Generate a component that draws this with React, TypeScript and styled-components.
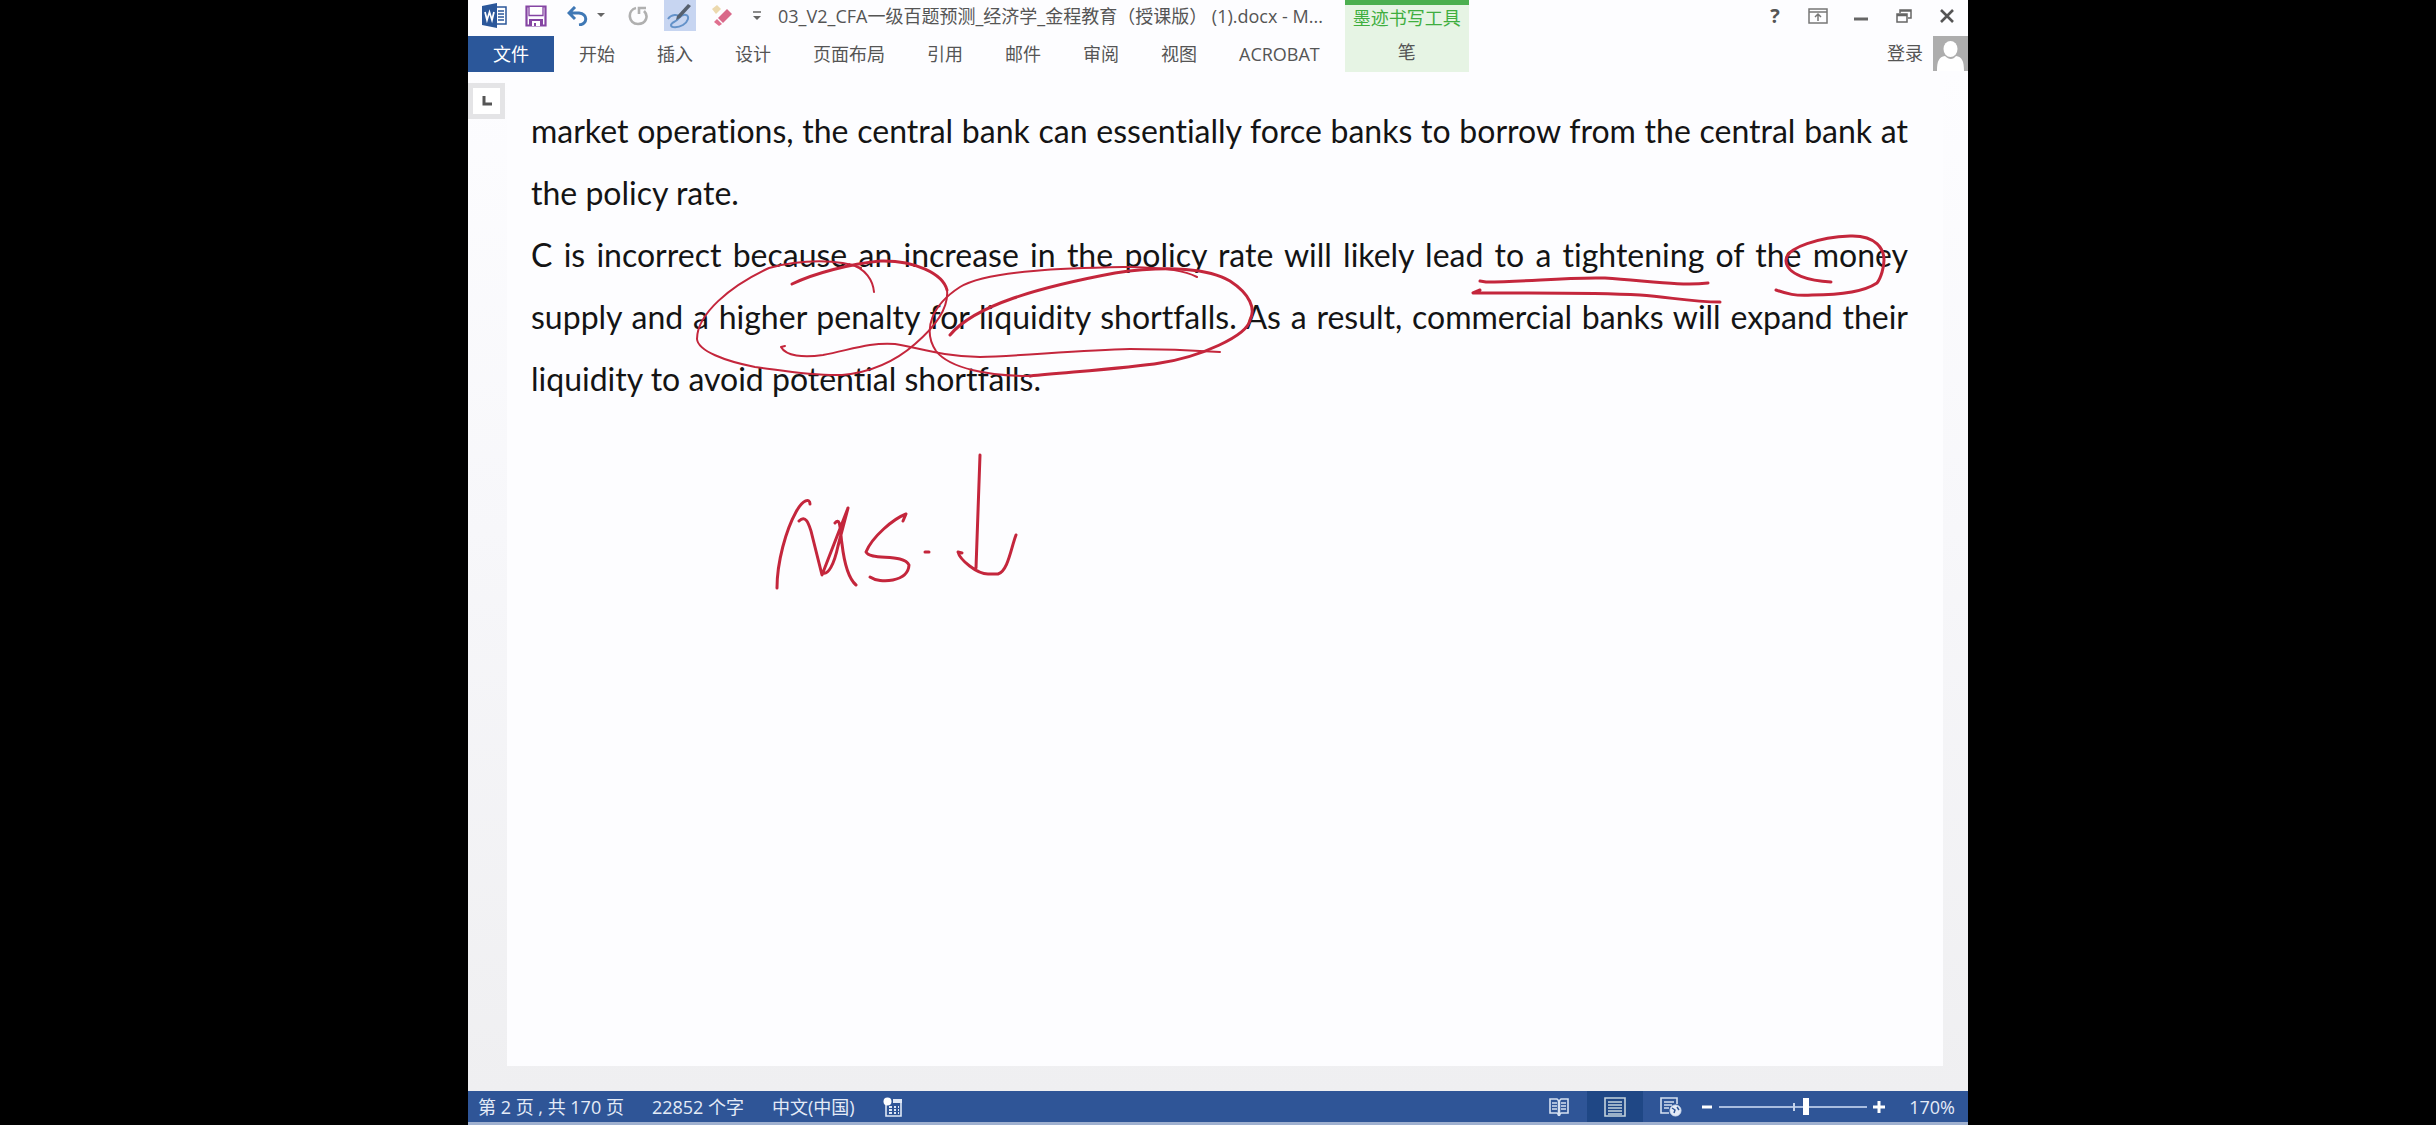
import React from 'react';
import styled, { createGlobalStyle, css } from 'styled-components';

const ui = '"Open Sans", "Noto Sans CJK SC", sans-serif';

const Global = createGlobalStyle`
  * { box-sizing: border-box; }
  body { margin: 0; background: #000; font-family: ${ui}; color: #555; }
  button { font: inherit; color: inherit; border: 0; background: none; padding: 0; white-space: nowrap; }
  svg { display: block; fill: none; }
`;

const Stage = styled.div`
  display: flex;
  justify-content: center;
  height: 100vh;
  overflow: hidden;
`;

const AppWindow = styled.div`
  display: flex;
  flex-direction: column;
  height: 100%;
  aspect-ratio: 4 / 3;
  background: #fdfdff;
`;

const Header = styled.header`
  display: flex;
  flex: none;
  height: 72px;
  justify-content: space-between;
`;

const HeaderMain = styled.div`
  display: flex;
`;

const Rows = styled.div`
  display: flex;
  flex-direction: column;
`;

const TitleRow = styled.div`
  display: flex;
  height: 36px;
  padding-left: 13px;
  align-items: flex-start;
`;

const ToolButton = styled.button<{ $w: number; $on?: boolean }>`
  display: flex;
  align-items: center;
  justify-content: center;
  flex: none;
  width: ${p => p.$w}px;
  height: 31px;
  ${p => p.$on && css`background: #c7d5f1;`}
`;

const Title = styled.h1`
  margin: 0 0 0 12px;
  font-size: 18px;
  font-weight: 400;
  line-height: 32px;
  white-space: nowrap;
`;

const Tabs = styled.nav`
  display: flex;
  height: 36px;
`;

const Tab = styled.button`
  padding: 0 21px;
  font-size: 18px;
  line-height: 32px;
`;

const FileTab = styled(Tab)`
  width: 86px;
  margin-right: 4px;
  background: #2b579a;
  color: #fff;
`;

const ToolGroup = styled.div`
  display: flex;
  flex-direction: column;
  width: 124px;
  margin-left: 4px;
  border-top: 5px solid #4caf50;
  background: #e6f4e4;
  text-align: center;
`;

const ToolGroupName = styled.span`
  height: 31px;
  color: #3fae3f;
  font-size: 18px;
  line-height: 26px;
  white-space: nowrap;
`;

const Side = styled.div`
  display: flex;
  flex-direction: column;
  align-items: flex-end;
`;

const WindowButtons = styled.div`
  display: flex;
  height: 35px;
  align-items: flex-start;
`;

const WinButton = styled(ToolButton)`
  font-size: 20px;
  font-weight: 700;
`;

const Account = styled.button`
  display: flex;
  align-items: center;
  gap: 10px;
  height: 36px;
  font-size: 18px;
  line-height: 32px;
`;

const Workspace = styled.main`
  display: flex;
  flex: 1;
  min-height: 0;
  background: linear-gradient(#fdfdff, #f7f7fa 45%, #efeff1);
`;

const Gutter = styled.div`
  flex: none;
  width: 39px;
  padding-top: 11px;
`;

const TabStop = styled.button`
  display: flex;
  width: 37px;
  height: 36px;
  align-items: center;
  justify-content: center;
  border: 5px solid #e4e4e6;
  background: #fff;
`;

const Page = styled.article`
  position: relative;
  flex: 1;
  margin: 0 25px 25px 0;
  padding: 28px 35px 0 24px;
  background: #fdfdff;
  color: #141414;
  font-family: Lato, "Liberation Sans", sans-serif;
  font-size: 32px;
  font-variant-ligatures: none;
  line-height: 62px;
`;

const Paragraph = styled.p`
  margin: 0;
  text-align: justify;
`;

const Ink = styled.svg`
  position: absolute;
  left: 0;
  top: 0;
  width: 100%;
  stroke: #c4263c;
  stroke-linecap: round;
  stroke-linejoin: round;
  pointer-events: none;
`;

const StatusBar = styled.footer`
  display: flex;
  flex: none;
  height: 34px;
  align-items: center;
  justify-content: space-between;
  padding: 0 13px 0 10px;
  border-bottom: 3px solid #9fb0cf;
  background: #2f5597;
  color: #e4ebf7;
  font-size: 18px;
  line-height: 30px;
`;

const StatusGroup = styled.div`
  display: flex;
  align-items: center;
  height: 100%;
  gap: 28px;
`;

const ViewGroup = styled(StatusGroup)`
  gap: 0;
`;

const ViewButton = styled.button<{ $on?: boolean }>`
  display: flex;
  width: 56px;
  height: 100%;
  align-items: center;
  justify-content: center;
  ${p => p.$on && css`background: #1f4785;`}
`;

const ZoomStep = styled.button`
  display: flex;
  align-items: center;
  justify-content: center;
  width: 16px;
  height: 30px;
`;

const ZoomSlider = styled.input`
  appearance: none;
  width: 148px;
  height: 20px;
  margin: 0 4px;
  background:
    linear-gradient(#c5d3ea, #c5d3ea) 74px 50% / 2px 8px no-repeat,
    linear-gradient(#a9bde0, #a9bde0) 0 50% / 100% 2px no-repeat;
  &::-webkit-slider-thumb {
    appearance: none;
    width: 6px;
    height: 17px;
    background: #fff;
  }
`;

const ZoomValue = styled.button`
  margin-left: 22px;
`;

const tabNames = ['开始', '插入', '设计', '页面布局', '引用', '邮件', '审阅', '视图', 'ACROBAT'];

const WordIcon = () => (
  <svg width="25" height="25" viewBox="0 0 25 25">
    <path d="M13 4h11v17H13" fill="#fff" stroke="#2b579a" strokeWidth="1.5" />
    <path d="M16 8h6M16 11h6M16 14h6M16 17h6" stroke="#2b579a" strokeWidth="1.4" />
    <path d="M0 3 15 0v25L0 22z" fill="#2b579a" />
    <path d="m3 9 2 8 2.500-8L10 17l2-8" stroke="#fff" strokeWidth="1.700" />
  </svg>
);

const SaveIcon = () => (
  <svg width="22" height="22" viewBox="0 0 22 22">
    <path d="M1.500 1.500h19v19h-19z" stroke="#8545a3" strokeWidth="2.200" />
    <path d="M4 2v8.500h14V2" stroke="#8545a3" strokeWidth="1.300" fill="#fff" />
    <path d="M4 14h14v7H4z" fill="#8545a3" />
    <path d="M7 16h8v5h-4v-3H9v3H7z" fill="#fff" />
  </svg>
);

const UndoIcon = () => (
  <svg width="22" height="20" viewBox="0 0 22 20">
    <path d="M2 7h10c9 1 9 11 0 12M8 1 2 7l6 6" stroke="#3f78b5" strokeWidth="3" />
  </svg>
);

const Caret = () => (
  <svg width="8" height="5" viewBox="0 0 8 5"><path d="M0 0h8L4 4z" fill="#666" /></svg>
);

const RedoIcon = () => (
  <svg width="20" height="21" viewBox="0 0 20 21">
    <path d="M8 3C-1 5 0 19 10 19c8 0 11-8 6-13" stroke="#b0b0b0" strokeWidth="2.600" />
    <path d="M11 9V3h7" stroke="#b0b0b0" strokeWidth="2.600" />
  </svg>
);

const PenIcon = () => (
  <svg width="26" height="26" viewBox="0 0 26 26">
    <path d="M1 16c3-5 11-5 11-2 0 4-8 5-8 8s7 3 12 0 7-9 3-10-6 2-8 4" stroke="#6492c9" strokeWidth="2" />
    <path d="m9 17 1-4L21 1l3 2-11 12z" fill="#56606e" />
  </svg>
);

const EraserIcon = () => (
  <svg width="22" height="22" viewBox="0 0 22 22">
    <path d="m1 4 5-4 4 4-5 5z" fill="#ecd9ae" />
    <path d="m7 13 9-9 5 5-9 9z" fill="#d9698a" />
    <path d="m3 17 3-3 5 5-3 2z" fill="#e0708f" />
  </svg>
);

const MoreIcon = () => (
  <svg width="8" height="10" viewBox="0 0 8 10">
    <path d="M0 1h8" stroke="#666" strokeWidth="1.500" /><path d="M0 5h8L4 9z" fill="#666" />
  </svg>
);

const RibbonIcon = () => (
  <svg width="20" height="16" viewBox="0 0 20 16" stroke="#777" strokeWidth="1.500">
    <path d="M1 1h18v14H1zM1 4h18M10 13V7M7 9l3-3 3 3" />
  </svg>
);

const MinimizeIcon = () => (
  <svg width="14" height="16" viewBox="0 0 14 16"><path d="M0 11h14" stroke="#666" strokeWidth="3" /></svg>
);

const RestoreIcon = () => (
  <svg width="16" height="16" viewBox="0 0 16 16" stroke="#666" strokeWidth="1.500">
    <path d="M1 6h10v8H1zM1 7.500h10M4 5V2h11v8h-3M4 3h11" />
  </svg>
);

const CloseIcon = () => (
  <svg width="14" height="14" viewBox="0 0 14 14"><path d="m1 1 12 12M13 1 1 13" stroke="#555" strokeWidth="2.600" /></svg>
);

const Avatar = () => (
  <svg width="35" height="35" viewBox="0 0 35 35">
    <path d="M0 0h35v35H0z" fill="#adadad" />
    <ellipse cx="17.500" cy="13" rx="7" ry="8" fill="#fff" />
    <path d="M4 35C4 25 6 21 12 20c4 4 8 4 11 0 6 1 8 5 8 15z" fill="#fff" />
  </svg>
);

const MacroIcon = () => (
  <svg width="20" height="20" viewBox="0 0 20 20">
    <path d="M3 8v11h15V3h-8" stroke="#dfe8f6" strokeWidth="1.600" />
    <path d="M10 2h9v4h-9z" fill="#dfe8f6" />
    <circle cx="4.500" cy="4.500" r="4" fill="#fff" />
    <path d="M6 10h3M11 10h2M15 10h1M6 13h3M11 13h2M15 13h1M6 16h3M11 16h2M15 16h1" stroke="#dfe8f6" strokeWidth="1.800" />
  </svg>
);

const ReadIcon = () => (
  <svg width="20" height="20" viewBox="0 0 20 20" stroke="#d5e0f1">
    <path d="M1 2h7l2 2 2-2h7v14h-7l-2 2-2-2H1z" strokeWidth="1.600" />
    <path d="M10 4v15" strokeWidth="2.500" />
    <path d="M3 6h5M3 9h5M3 12h5M12 6h5M12 9h5M12 12h5" strokeWidth="1.400" />
  </svg>
);

const PrintIcon = () => (
  <svg width="22" height="20" viewBox="0 0 22 20" stroke="#c4d3dd">
    <path d="M1 1h20v18H1z" strokeWidth="1.600" />
    <path d="M4 5h14M4 8h14M4 11h14M4 14h14M4 17h14" strokeWidth="1.700" />
  </svg>
);

const WebIcon = () => (
  <svg width="22" height="20" viewBox="0 0 22 20" stroke="#d5e0f1">
    <path d="M17 7V1H1v15h8" strokeWidth="1.600" />
    <path d="M4 5h10M4 8h8M4 11h5" strokeWidth="1.600" />
    <circle cx="15.500" cy="13.500" r="5.500" fill="#e4ebf7" />
    <path d="m12 11 3 2-1 3M17 10l2 3" stroke="#2f5597" strokeWidth="1.500" />
  </svg>
);

export default function App() {
  return (
    <Stage>
      <Global />
      <AppWindow>
        <Header>
          <HeaderMain>
            <Rows>
              <TitleRow>
                <ToolButton $w={26} aria-label="Word"><WordIcon /></ToolButton>
                <ToolButton $w={58} aria-label="保存"><SaveIcon /></ToolButton>
                <ToolButton $w={26} aria-label="撤消"><UndoIcon /></ToolButton>
                <ToolButton $w={20} aria-label="撤消列表"><Caret /></ToolButton>
                <ToolButton $w={53} aria-label="重复"><RedoIcon /></ToolButton>
                <ToolButton $w={32} $on aria-label="笔"><PenIcon /></ToolButton>
                <ToolButton $w={52} aria-label="橡皮擦"><EraserIcon /></ToolButton>
                <ToolButton $w={18} aria-label="自定义"><MoreIcon /></ToolButton>
                <Title>03_V2_CFA一级百题预测_经济学_金程教育（授课版） (1).docx - M...</Title>
              </TitleRow>
              <Tabs>
                <FileTab>文件</FileTab>
                {tabNames.map(name => <Tab key={name}>{name}</Tab>)}
              </Tabs>
            </Rows>
            <ToolGroup>
              <ToolGroupName>墨迹书写工具</ToolGroupName>
              <Tab>笔</Tab>
            </ToolGroup>
          </HeaderMain>
          <Side>
            <WindowButtons>
              <WinButton $w={42} aria-label="帮助">?</WinButton>
              <WinButton $w={43} aria-label="功能区显示选项"><RibbonIcon /></WinButton>
              <WinButton $w={43} aria-label="最小化"><MinimizeIcon /></WinButton>
              <WinButton $w={43} aria-label="还原"><RestoreIcon /></WinButton>
              <WinButton $w={43} aria-label="关闭"><CloseIcon /></WinButton>
            </WindowButtons>
            <Account>登录<Avatar /></Account>
          </Side>
        </Header>
        <Workspace>
          <Gutter>
            <TabStop aria-label="制表符">
              <svg width="10" height="10" viewBox="0 0 10 10"><path d="M2 0v8h8" stroke="#555" strokeWidth="3" /></svg>
            </TabStop>
          </Gutter>
          <Page>
            <Paragraph>
              market operations, the central bank can essentially force banks to borrow from the central bank at the&nbsp;policy rate.
            </Paragraph>
            <Paragraph>
              C is incorrect because an increase in the policy rate will likely lead to a tightening of the money supply and a higher penalty for liquidity shortfalls. As a result, commercial banks will expand their liquidity to avoid potential shortfalls.
            </Paragraph>
            <Ink viewBox="507 72 1436 600" strokeWidth="2">
              <path d="M861 268C840 259 801 259 769 268C730 286 697 314 697 339C698 351 725 361 755 367C780 370 810 376 842 375C864 373 890 366 915 344C936 326 949 308 947 290M849 264C866 268 873 281 874 292" />
              <path strokeWidth="3" d="M792 284C815 273 850 264 880 261C915 260 943 274 947 290" />
              <path d="M785 346 781 347C786 356 803 358 823 355C850 350 870 342 895 344C920 348 940 356 980 357C1020 356 1080 350 1130 349C1165 349 1190 350 1220 352" />
              <path strokeWidth="3" d="M950 335C975 305 1040 287 1115 273C1170 265 1210 269 1230 281C1250 294 1256 309 1250 320C1247 336 1200 357 1160 363C1130 368 1070 372 1030 376" />
              <path d="M1030 376C990 376 950 369 936 351C922 330 932 305 960 287C990 269 1080 268 1130 267C1170 268 1185 271 1197 277" />
              <path strokeWidth="3" d="M1480 281 1486 282C1530 282 1560 277 1605 278C1650 281 1680 286 1708 283" />
              <path strokeWidth="3" d="m1480 290-7 3C1530 293 1590 292 1640 295C1670 297 1690 302 1720 302" />
              <path strokeWidth="3" d="M1831 282C1810 281 1787 275 1786 261C1785 247 1822 237 1850 236C1877 235 1884 250 1884 260C1884 267 1881 278 1877 283C1865 291 1845 295 1812 295C1795 296 1787 294 1776 290" />
              <path strokeWidth="3" d="M777 588C777 562 786 530 796 512C803 499 810 498 810 504M799 521C806 514 809 525 811 531L822 575 848 508 838 546C834 565 828 575 823 573M835 523C841 516 840 532 842 544C844 561 848 578 856 585" />
              <path strokeWidth="3" d="M903 521 906 514C893 519 872 537 866 552C870 561 904 553 909 565C908 582 880 584 870 577M925 552H929" />
              <path strokeWidth="3" d="M980 455 976 568M962 553 958 552C960 560 977 574 988 574H998C1008 571 1011 548 1016 535" />
            </Ink>
          </Page>
        </Workspace>
        <StatusBar>
          <StatusGroup>
            <span>第 2 页 , 共 170 页</span>
            <span>22852 个字</span>
            <span>中文(中国)</span>
            <MacroIcon />
          </StatusGroup>
          <ViewGroup>
            <ViewButton aria-label="阅读视图"><ReadIcon /></ViewButton>
            <ViewButton $on aria-label="页面视图"><PrintIcon /></ViewButton>
            <ViewButton aria-label="Web 版式"><WebIcon /></ViewButton>
            <ZoomStep aria-label="缩小"><svg width="10" height="10"><path d="M0 5h10" stroke="#fff" strokeWidth="3" /></svg></ZoomStep>
            <ZoomSlider type="range" aria-label="缩放" min={0} max={100} defaultValue={59} />
            <ZoomStep aria-label="放大"><svg width="12" height="12"><path d="M0 6h12M6 0v12" stroke="#fff" strokeWidth="3" /></svg></ZoomStep>
            <ZoomValue>170%</ZoomValue>
          </ViewGroup>
        </StatusBar>
      </AppWindow>
    </Stage>
  );
}
